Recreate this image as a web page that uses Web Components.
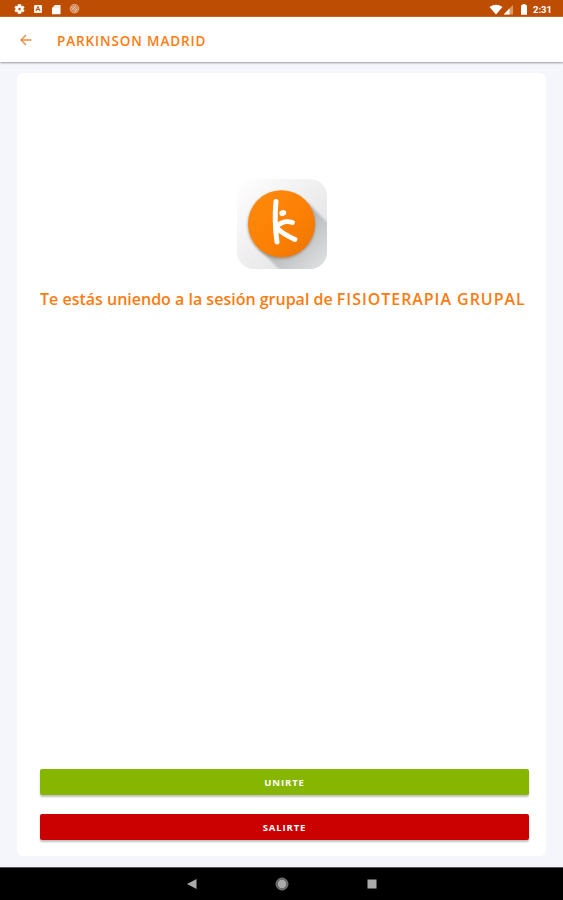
<!DOCTYPE html>
<html lang="es">
<head>
<meta charset="utf-8">
<title>Parkinson Madrid</title>
<style>
  body {
    margin: 0;
    font-family: "Open Sans", sans-serif;
    --accent: #fb7c10;
    --page-bg: #f4f6fb;
  }
  .group { letter-spacing: .95px; }
</style>
</head>
<body>
<session-screen>
  <status-bar slot="status" time="2:31"></status-bar>
  <app-header slot="header">PARKINSON MADRID</app-header>
  <session-card>
    <app-logo slot="logo"></app-logo>
    <span slot="message">Te estás uniendo a la sesión grupal de <span class="group">FISIOTERAPIA GRUPAL</span></span>
    <action-button slot="actions" color="#87b600">UNIRTE</action-button>
    <action-button slot="actions" color="#cb0000">SALIRTE</action-button>
  </session-card>
  <nav-bar slot="nav"></nav-bar>
</session-screen>

<script>
class BaseElement extends HTMLElement {
  constructor() {
    super();
    this.attachShadow({ mode: 'open' });
  }

  connectedCallback() {
    this.shadowRoot.innerHTML = `<style>${this.getStyles()}</style>${this.getMarkup()}`;
  }
}

class SessionScreen extends BaseElement {
  getStyles() {
    return `
      :host {
        display: flex;
        flex-direction: column;
        height: 900px;
        background: var(--page-bg);
      }
      main {
        flex: 1;
        display: flex;
        padding: 11px 17px;
      }
    `;
  }

  getMarkup() {
    return `
      <slot name="status"></slot>
      <slot name="header"></slot>
      <main><slot></slot></main>
      <slot name="nav"></slot>
    `;
  }
}

class StatusBar extends BaseElement {
  getStyles() {
    return `
      :host {
        display: flex;
        justify-content: space-between;
        align-items: center;
        box-sizing: border-box;
        height: 17px;
        padding: 2px 11px 0 13px;
        background: #bd4d02;
        border-bottom: 1px solid #c96a2f;
        color: #fff;
        font: 700 9.500px Roboto, sans-serif;
      }
      div {
        display: flex;
        align-items: center;
      }
      .left { gap: 6px; }
      svg { display: block; }
      .battery { margin: 0 5px 0 6px; }
    `;
  }

  getMarkup() {
    return `
      <div class="left">
        <svg width="13" height="12" viewBox="0 0 24 24" fill="#fff"><path d="M19.4 13c.1-.6.1-1.300 0-2l2.100-1.600-2-3.500-2.500 1a8 8 0 0 0-1.700-1L15 3H9l-.3 2.900a8 8 0 0 0-1.700 1l-2.500-1-2 3.500L4.600 11v2l-2.100 1.600 2 3.500 2.500-1 1.700 1L9 21h6l.3-2.900 1.700-1 2.500 1 2-3.500zM12 15a3 3 0 1 1 0-6 3 3 0 0 1 0 6z" fill-rule="evenodd" stroke="#fff" stroke-width="1"/></svg>
        <svg width="12" height="10" viewBox="0 0 12 10"><rect x="2" y="1" width="8" height="8" rx="1" fill="#fff0e4"/><path d="M4 7l2-4.500L8 7M5 5.500h2" fill="none" stroke="#a8592a" stroke-width="1"/></svg>
        <svg width="12" height="11" viewBox="0 0 12 11"><path d="M5 1h5.500v9.200H2V4z" fill="#fff"/><path d="M5 2v1.500M7 2v1.500M9 2v1.500" stroke="#e9b18b" stroke-width=".6"/></svg>
        <svg width="13" height="12" viewBox="0 0 13 12"><circle cx="6.500" cy="5.700" r="4.300" fill="#d48a5d" stroke="#e3ac87"/><path d="M3.500 4l5 5M5 3l4 4M4 7l4-4M6.500 8.500L9.500 5.500" stroke="#efcdb5" stroke-width=".6"/></svg>
      </div>
      <div>
        <svg class="wifi" width="14" height="11" viewBox="0 0 14 11"><path d="M.5 3Q7-1.600 13.500 3L7 10.500z" fill="#fff"/></svg>
        <svg width="11" height="11" viewBox="0 0 11 11"><path d="M.7 10.500L10 1v9.500z" fill="#dd995f"/><path d="M.7 10.500L6.500 4.500v6z" fill="#fff"/></svg>
        <svg class="battery" width="8" height="11" viewBox="0 0 8 11"><path d="M2.500 0h3v1.200H7v9.600H1V1.200h1.500z" fill="#fff"/></svg>
        <span>${this.getAttribute('time')}</span>
      </div>
    `;
  }
}

class AppHeader extends BaseElement {
  getStyles() {
    return `
      :host {
        display: flex;
        align-items: center;
        box-sizing: border-box;
        height: 45px;
        padding: 2px 20px 0;
        background: #fff;
        box-shadow: 0 1px 2px rgba(0, 0, 0, .38);
        color: var(--accent);
        font-size: 13.500px;
        font-weight: 600;
        letter-spacing: .88px;
      }
      svg { margin: 0 25px 1px 0; }
    `;
  }

  getMarkup() {
    return `
      <svg width="12" height="12" viewBox="0 0 12 12" fill="none" stroke="#ee8a3c" stroke-width="1.300"><path d="M11.500 6H1.200M6 1L1 6l5 5"/></svg>
      <slot></slot>
    `;
  }
}

class SessionCard extends BaseElement {
  getStyles() {
    return `
      :host {
        flex: 1;
        display: flex;
        flex-direction: column;
        align-items: center;
        box-sizing: border-box;
        padding: 104px 17px 16px 23px;
        border-radius: 6px;
        background: #fff;
      }
      p {
        align-self: flex-start;
        margin: 16px 0 0;
        color: var(--accent);
        font-size: 16px;
        font-weight: 600;
        line-height: 24px;
        white-space: nowrap;
      }
      .actions {
        align-self: stretch;
        display: flex;
        flex-direction: column;
        gap: 19px;
        margin-top: auto;
      }
    `;
  }

  getMarkup() {
    return `
      <slot name="logo"></slot>
      <p><slot name="message"></slot></p>
      <div class="actions"><slot name="actions"></slot></div>
    `;
  }
}

class AppLogo extends BaseElement {
  getStyles() {
    return `
      :host { display: block; height: 94px; margin-right: 6px; }
      svg { display: block; }
    `;
  }

  getMarkup() {
    return `
      <svg width="94" height="94" viewBox="235 177 94 94">
        <defs>
          <linearGradient id="tile" x1="0" y1="0" x2="1" y2="1">
            <stop offset="0" stop-color="#fff"/>
            <stop offset=".3" stop-color="#f5f5f6"/>
            <stop offset="1" stop-color="#dddedf"/>
          </linearGradient>
          <linearGradient id="cast" x1="0" y1="0" x2="1" y2="1">
            <stop offset=".3" stop-color="#b0b2b4"/>
            <stop offset=".7" stop-color="#dbdcdd"/>
          </linearGradient>
          <linearGradient id="disc" x1="0" y1="0" x2="1" y2="1">
            <stop offset="0" stop-color="#ff8b0c"/>
            <stop offset=".6" stop-color="#fb7f03"/>
            <stop offset="1" stop-color="#ea7505"/>
          </linearGradient>
          <clipPath id="round"><rect x="237" y="179" width="90" height="90" rx="17"/></clipPath>
          <filter id="soft"><feGaussianBlur stdDeviation="1"/></filter>
        </defs>
        <g clip-path="url(#round)">
          <rect x="237" y="179" width="90" height="90" fill="url(#tile)"/>
          <path d="M307 202L347 242V289H299L259 249z" fill="url(#cast)" filter="url(#soft)"/>
        </g>
        <circle cx="281.500" cy="225" r="34" fill="#8f7965" opacity=".6" filter="url(#soft)"/>
        <circle cx="281.500" cy="223.800" r="33.500" fill="url(#disc)"/>
        <g fill="none" stroke="#fff" stroke-linecap="round" stroke-linejoin="round">
          <path d="M276 201.500Q274 221 277 242" stroke-width="5"/>
          <path d="M277 226Q284 219.500 292.500 222.500" stroke-width="4.800"/>
          <path d="M278 229Q283 234 295 239.500" stroke-width="4.800"/>
        </g>
        <ellipse cx="282.800" cy="213" rx="3.500" ry="2.900" transform="rotate(-20 283 213)" fill="#fff"/>
      </svg>
    `;
  }
}

class ActionButton extends BaseElement {
  getStyles() {
    return `
      :host { display: block; }
      button {
        display: block;
        width: 100%;
        height: 26px;
        padding: 1px 0 0;
        border: 0;
        border-radius: 2px;
        background: ${this.getAttribute('color')};
        box-shadow: 0 2px 2px rgba(0, 0, 0, .25);
        color: #fff;
        font: 700 9.500px/25px "Open Sans", sans-serif;
        letter-spacing: .9px;
      }
    `;
  }

  getMarkup() {
    return `<button><slot></slot></button>`;
  }
}

class NavBar extends BaseElement {
  getStyles() {
    return `
      :host {
        display: flex;
        justify-content: center;
        align-items: center;
        gap: 76px;
        box-sizing: border-box;
        height: 33px;
        background: #000;
        border-top: 1px solid #555;
      }
    `;
  }

  getMarkup() {
    return `
      <svg width="14" height="14" viewBox="0 0 14 14"><path d="M11.500 2v10L2 7z" fill="#aaa"/></svg>
      <svg width="14" height="14" viewBox="0 0 14 14"><circle cx="7" cy="7" r="6" fill="#666" stroke="#777"/><circle cx="7" cy="7" r="4.200" fill="#aaa"/></svg>
      <svg width="14" height="14" viewBox="0 0 14 14"><rect x="2.500" y="2.500" width="9" height="9" fill="#aaa"/></svg>
    `;
  }
}

customElements.define('session-screen', SessionScreen);
customElements.define('status-bar', StatusBar);
customElements.define('app-header', AppHeader);
customElements.define('session-card', SessionCard);
customElements.define('app-logo', AppLogo);
customElements.define('action-button', ActionButton);
customElements.define('nav-bar', NavBar);
</script>
</body>
</html>
